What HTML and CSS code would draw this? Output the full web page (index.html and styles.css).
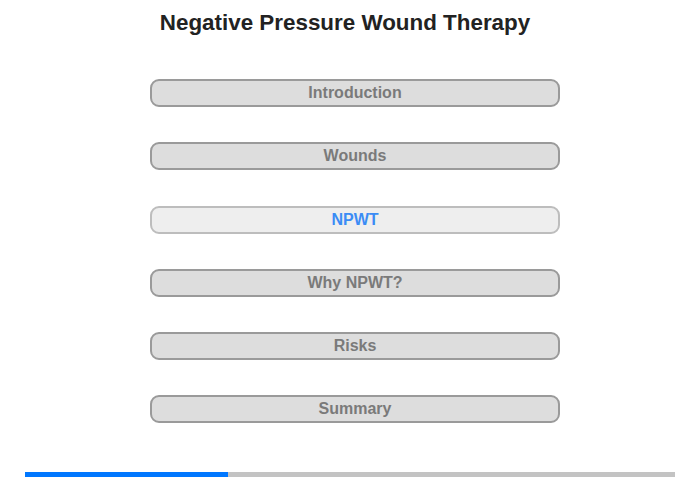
FILE: index.html
```html
<!DOCTYPE html>
<html>
<head>
<meta charset="utf-8">
<link rel="stylesheet" href="styles.css">
</head>
<body>
<div class="page">
  <h1 class="title">Negative Pressure Wound Therapy</h1>
  <nav class="menu">
    <div class="item">Introduction</div>
    <div class="item">Wounds</div>
    <div class="item active">NPWT</div>
    <div class="item">Why NPWT?</div>
    <div class="item">Risks</div>
    <div class="item">Summary</div>
  </nav>
  <div class="progress"><div class="fill" style="width:31.2%"></div></div>
</div>
</body>
</html>
```
FILE: styles.css
```css
html, body { margin: 0; padding: 0; background: #fff; }
.page {
  width: 700px;
  height: 480px;
  font-family: "Liberation Sans", Arial, sans-serif;
  display: flex;
  flex-direction: column;
}
.title {
  margin: 10px 0 0 0;
  font-size: 22.4px;
  line-height: 26px;
  font-weight: bold;
  color: #222;
  text-align: center;
  padding-right: 10px;
}
.menu {
  margin: 43px 0 0 150px;
  width: 410px;
  display: flex;
  flex-direction: column;
  gap: 35.3px;
}
.item {
  box-sizing: border-box;
  height: 28px;
  border: 2px solid #9a9a9a;
  border-radius: 9px;
  background: #dddddd;
  color: #7a7a7a;
  font-weight: bold;
  font-size: 16px;
  line-height: 24px;
  text-align: center;
}
.item.active {
  background: #eeeeee;
  border-color: #bdbdbd;
  color: #3b8cf5;
}
.progress {
  margin: 49px 0 0 25px;
  width: 650px;
  height: 5px;
  background: #c3c3c3;
}
.fill {
  height: 100%;
  background: #0077ff;
}
```
